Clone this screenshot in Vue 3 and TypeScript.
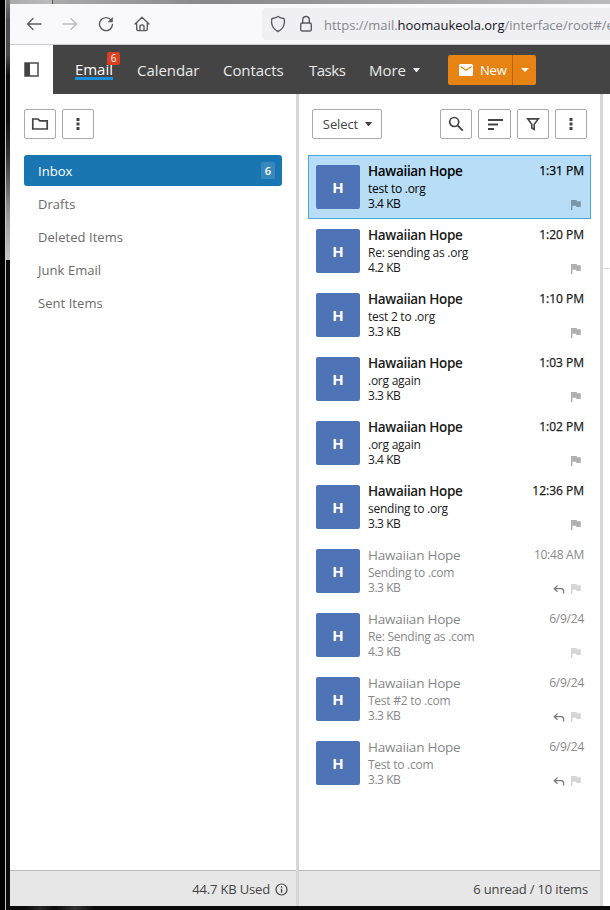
<script setup lang="ts">
interface Folder { name: string; count?: number }
interface Message { subject: string; size: string; time: string; unread: boolean; replied?: boolean; selected?: boolean }

const navItems = ['Calendar', 'Contacts', 'Tasks']

const folders: Folder[] = [
  { name: 'Inbox', count: 6 },
  { name: 'Drafts' },
  { name: 'Deleted Items' },
  { name: 'Junk Email' },
  { name: 'Sent Items' },
]

const messages: Message[] = [
  { subject: 'test to .org', size: '3.4 KB', time: '1:31 PM', unread: true, selected: true },
  { subject: 'Re: sending as .org', size: '4.2 KB', time: '1:20 PM', unread: true },
  { subject: 'test 2 to .org', size: '3.3 KB', time: '1:10 PM', unread: true },
  { subject: '.org again', size: '3.3 KB', time: '1:03 PM', unread: true },
  { subject: '.org again', size: '3.4 KB', time: '1:02 PM', unread: true },
  { subject: 'sending to .org', size: '3.3 KB', time: '12:36 PM', unread: true },
  { subject: 'Sending to .com', size: '3.3 KB', time: '10:48 AM', unread: false, replied: true },
  { subject: 'Re: Sending as .com', size: '4.3 KB', time: '6/9/24', unread: false },
  { subject: 'Test #2 to .com', size: '3.3 KB', time: '6/9/24', unread: false, replied: true },
  { subject: 'Test to .com', size: '3.3 KB', time: '6/9/24', unread: false, replied: true },
]
</script>

<template>
  <div class="screen">
    <div class="edge"><div class="edge-upper"></div><div class="edge-lower"></div></div>
    <div class="window">
      <div class="titlebar"></div>
      <div class="browser">
        <svg class="bi back" width="16" height="16" viewBox="0 0 16 16"><path d="M15 8H1.5M7 2.5L1.5 8L7 13.500" /></svg>
        <svg class="bi fwd" width="16" height="16" viewBox="0 0 16 16"><path d="M1 8H14.500M9 2.500L14.500 8L9 13.500" /></svg>
        <svg class="bi" width="16" height="16" viewBox="0 0 16 16"><path d="M13.200 4.200A6.500 6.500 0 1 0 14.500 8.500" /><path d="M14.800 1v5.200H9.600z" class="solid" /></svg>
        <svg class="bi home" width="16" height="16" viewBox="0 0 16 16"><path d="M1 8L8 1.300L15 8M2.700 6.500V13.200Q2.700 14.600 4 14.600H12Q13.300 14.600 13.300 13.200V6.500M6 14.500V10.500Q6 9 8 9T10 10.500V14.500" /></svg>
        <div class="urlbar">
          <svg class="bi" width="16" height="18" viewBox="0 0 16 18"><path d="M8 1.500Q10.500 3.400 14 3.500Q14.700 5 14.400 8Q13.500 14 8 16.500Q2.500 14 1.600 8Q1.300 5 2 3.500Q5.500 3.400 8 1.500Z" /></svg>
          <svg class="bi lock" width="14" height="18" viewBox="0 0 14 18"><rect x="1.700" y="8" width="10.600" height="8" rx="1.600" /><path d="M3.700 8V4.700Q3.700 1.500 7 1.500T10.300 4.700V8" /></svg>
          <span class="url">https://mail.<b>hoomaukeola.org</b>/interface/root#/e</span>
        </div>
      </div>

      <header class="appbar">
        <div class="toggle">
          <svg width="15" height="15" viewBox="0 0 15 15"><rect x="1" y="1" width="13" height="13" fill="#fff" stroke="#555" stroke-width="1.600" /><path d="M1 1H6V14H1z" fill="#444" /></svg>
        </div>
        <nav class="nav">
          <a class="active"><span>Email</span><i class="badge">6</i></a>
          <a v-for="item in navItems" :key="item" :class="item.toLowerCase()">{{ item }}</a>
          <a class="more">More</a><i class="caret"></i>
          <div class="new">
            <div class="new-main">
              <svg width="14" height="12" viewBox="0 0 14 12"><rect width="14" height="12" rx="1.500" fill="#fff" /><path d="M1.500 2.500L7 6.200L12.500 2.500" fill="none" stroke="#e78313" stroke-width="1.300" /></svg>
              <span>New</span>
            </div>
            <div class="new-drop"><i class="caret"></i></div>
          </div>
        </nav>
      </header>

      <main class="content">
        <section class="sidebar">
          <div class="side-tools">
            <button><svg width="18" height="14" viewBox="0 0 18 14"><path d="M1.800 2H7L8.800 3.900H16.200V12H1.800Z" fill="none" stroke="#444" stroke-width="1.700" /></svg></button>
            <button><svg width="4" height="14" viewBox="0 0 4 14"><path d="M.5 1h3v3h-3zM.5 5.500h3v3h-3zM.5 10h3v3h-3z" fill="#444" /></svg></button>
          </div>
          <div class="folders">
            <div v-for="folder in folders" :key="folder.name" class="folder" :class="{ current: folder.count }">
              <span>{{ folder.name }}</span><i v-if="folder.count">{{ folder.count }}</i>
            </div>
          </div>
          <footer>
            <span class="used">44.7 KB Used</span>
            <svg width="13" height="13" viewBox="0 0 13 13"><circle cx="6.500" cy="6.500" r="5.500" fill="none" stroke="#444" stroke-width="1.200" /><path d="M5.900 3.300h1.300v1.400H5.900zM5.900 5.700h1.300v4H5.900z" fill="#444" /></svg>
          </footer>
        </section>

        <section class="list">
          <div class="list-tools">
            <button class="select"><span>Select</span><i class="caret"></i></button>
            <button class="search"><svg width="16" height="16" viewBox="0 0 16 16"><circle cx="6.200" cy="6" r="4.500" fill="none" stroke="#444" stroke-width="1.700" /><path d="M9.500 9.300L14.800 14.600" stroke="#444" stroke-width="1.900" /></svg></button>
            <button class="sort"><svg width="16" height="12" viewBox="0 0 16 12"><path d="M1 2H16M1 6.500H11M1 11H7" stroke="#444" stroke-width="1.800" /></svg></button>
            <button><svg width="14" height="14" viewBox="0 0 14 14"><path d="M1.700 1.900H12.300L8.200 7.300V12.300L5.800 11V7.300Z" fill="none" stroke="#444" stroke-width="1.600" /></svg></button>
            <button><svg width="4" height="14" viewBox="0 0 4 14"><path d="M.5 1h3v3h-3zM.5 5.500h3v3h-3zM.5 10h3v3h-3z" fill="#444" /></svg></button>
          </div>
          <div class="messages">
            <article v-for="(m, i) in messages" :key="i" :class="{ unread: m.unread, selected: m.selected }">
              <div class="avatar">H</div>
              <div class="text">
                <div class="from">Hawaiian Hope</div>
                <div class="subject">{{ m.subject }}</div>
                <div class="size">{{ m.size }}</div>
              </div>
              <div class="meta">
                <div class="time">{{ m.time }}</div>
                <div class="marks">
                  <svg v-if="m.replied" width="12" height="9" viewBox="0 0 12 9"><path d="M4.500 .6L1.200 3.700L4.500 6.800M1.500 3.700H8Q10.700 3.700 10.700 6.500V8.500" fill="none" stroke="#777" stroke-width="1.200" /></svg>
                  <svg class="flag" width="10" height="10" viewBox="0 0 10 10"><path d="M0 0H5.700V1.200H9.800V7H5.300V5.800H1.400V10H0Z" /></svg>
                </div>
              </div>
            </article>
          </div>
          <footer><span class="unread-count">6 unread / 10 items</span></footer>
        </section>
        <aside class="preview"><div class="rule"></div></aside>
      </main>
      <div class="bottom"></div>
    </div>
  </div>
</template>

<style>
body { margin: 0; overflow: hidden; background: #000; }
</style>

<style scoped>
* { box-sizing: border-box; }
.screen { display: flex; width: 610px; height: 910px; overflow: hidden; background: #000; font-family: "Open Sans", "Noto Sans", sans-serif; white-space: nowrap; }
.edge { flex: none; width: 10px; height: 910px; padding-left: 6px; background: linear-gradient(90deg, #000 5px, #c8c8c8 5px, #c8c8c8 6px, #111 6px); }
.edge-upper { height: 260px; background: linear-gradient(#777, #4d4d4d 20px, #4a4a4a 55px, #111 75px, #111 120px, #333 155px, #999 215px, #c4c4c4); }
.edge-lower { height: 650px; background: #0c0c0c; }
.window { flex: none; width: 600px; display: flex; flex-direction: column; }
.titlebar { height: 4px; background: linear-gradient(90deg, #aaa, #bbb 42px, #555 42px, #555 43px, #aaa 43px, #888 200px, #bbb); }
.browser { height: 41px; display: flex; align-items: center; background: #f9f9fb; border-bottom: 1px solid #ccc; padding-left: 16px; }
.bi { flex: none; fill: none; stroke: #5b5b66; stroke-width: 1.400; stroke-linecap: round; stroke-linejoin: round; margin-right: 20px; }
.bi .solid { fill: #5b5b66; stroke: none; }
.fwd { stroke: #bbb; }
.home { margin-right: 112px; }
.urlbar { flex: 1; min-width: 0; height: 32px; display: flex; align-items: center; background: #f0f0f4; border-radius: 4px 0 0 4px; padding-left: 8px; overflow: hidden; }
.urlbar .bi { margin-right: 13px; }
.urlbar .lock { margin-right: 11px; }
.url { font-size: 13px; line-height: 20px; color: #87878e; padding-top: 2px; }
.url b { font-weight: 400; color: #15141a; }
.appbar { height: 49px; display: flex; }
.toggle { width: 43px; background: #fff; display: flex; align-items: center; padding-left: 14px; }
.nav { flex: 1; display: flex; align-items: center; background: #444; padding-left: 22px; color: #eaeaea; font-size: 15px; }
.nav a { width: 62px; margin-right: 24px; line-height: 22px; letter-spacing: -.05px; }
.nav .active { position: relative; width: 38px; color: #fff; }
.active span { display: block; height: 20px; line-height: 19px; margin-top: 0; border-bottom: 3px solid #1b8fdf; }
.badge { position: absolute; left: 32px; top: -8px; width: 13px; height: 13px; border-radius: 2px; background: #d9411e; font: 10px/13px "Open Sans", sans-serif; text-align: center; }
.nav .tasks { width: 36px; letter-spacing: -.5px; }
.nav .more { width: 37px; margin-right: 7px; }
.caret { border: solid transparent; border-width: 4px 3.5px 0; border-top-color: currentColor; width: 7px; height: 4px; }
.new { display: flex; width: 88px; height: 30px; margin-left: 28px; background: #e78313; border-radius: 2px; font-size: 13px; letter-spacing: -.2px; color: #fff; }
.new-main { width: 65px; display: flex; align-items: center; gap: 7px; padding-left: 11px; border-right: 1px solid #b5650c; }
.new-drop { width: 23px; display: flex; align-items: center; justify-content: center; }
.new-drop .caret { border-width: 4px 4px 0; width: 8px; }
.content { display: flex; height: 812px; background: #fff; }
.sidebar { width: 289px; border-right: 3px solid #d7d7d7; display: flex; flex-direction: column; }
.side-tools { display: flex; gap: 6px; padding: 15px 14px 0; }
button { width: 32px; height: 30px; display: flex; align-items: center; justify-content: center; padding: 0; background: #fff; border: 1px solid #aaa; border-radius: 2px; font: 13px "Open Sans", sans-serif; color: #444; }
.folders { flex: 1; padding: 15px 14px 0; }
.folder { height: 33px; display: flex; align-items: center; justify-content: space-between; padding: 0 7px 0 14px; font-size: 13px; letter-spacing: .05px; color: #6a6a6a; }
.folder.current { height: 31px; width: 258px; margin: 1px 0; background: #1976b2; border-radius: 3px; color: #fff; }
.folder i { width: 14px; height: 17px; font: 600 11px/17px "Open Sans", sans-serif; text-align: center; background: #3888bd; border-radius: 2px; }
footer { height: 36px; display: flex; align-items: center; justify-content: flex-end; background: #e7e7e7; border-top: 1px solid #b8bcb8; color: #444; font-size: 13px; letter-spacing: -.16px; padding: 1px 12px 0 0; }
.sidebar footer { gap: 5px; padding-right: 8px; }
.list { width: 304px; border-right: 3px solid #d7d7d7; display: flex; flex-direction: column; }
.list-tools { display: flex; gap: 6px; padding: 15px 13px 0; }
.select { width: 70px; margin-right: 52px; gap: 7px; padding-left: 1px; letter-spacing: -.1px; }
.sort { width: 33px; }
.messages { flex: 1; padding: 16px 9px 0; }
article { width: 283px; height: 64px; display: flex; padding: 10px 7px 0 8px; color: #888; font-size: 12px; }
article.unread { color: #1a1a1a; }
article.selected { background: #b8def7; box-shadow: inset 0 0 0 1px #4baadb; color: #000; }
.avatar { width: 44px; height: 44px; border-radius: 2px; background: #4e73b7; color: #fff; font: 700 15px/45px "Open Sans", sans-serif; text-align: center; margin-right: 8px; }
.text { flex: 1; margin-top: -4px; }
.from { font-size: 13.5px; letter-spacing: -.23px; height: 20px; line-height: 21px; }
.unread .from { font-weight: 600; letter-spacing: -.34px; }
.subject, .size { height: 16px; line-height: 16px; }
.subject { margin-top: -1px; letter-spacing: -.25px; padding-top: .5px; }
.size { letter-spacing: -.45px; }
.meta { display: flex; flex-direction: column; align-items: flex-end; margin-top: -4px; }
.time { font-size: 12px; line-height: 20px; height: 38px; letter-spacing: -.25px; }
.unread .time { letter-spacing: 0; -webkit-text-stroke: .25px currentColor; }
.marks { display: flex; gap: 6px; align-items: center; margin: 1px 3px 0 0; height: 10px; }
.flag { fill: #d6d6d6; }
.unread .flag { fill: #b1b1b1; }
.selected .flag { fill: #7b95a5; }
.preview { flex: 1; padding-top: 174px; }
.rule { height: 1px; background: #ddd; }
.bottom { height: 4px; background: linear-gradient(90deg, #0b0b0b 15px, #282828 30px, #0b0b0b 45px, #333 65px, #0b0b0b 85px); }
</style>
